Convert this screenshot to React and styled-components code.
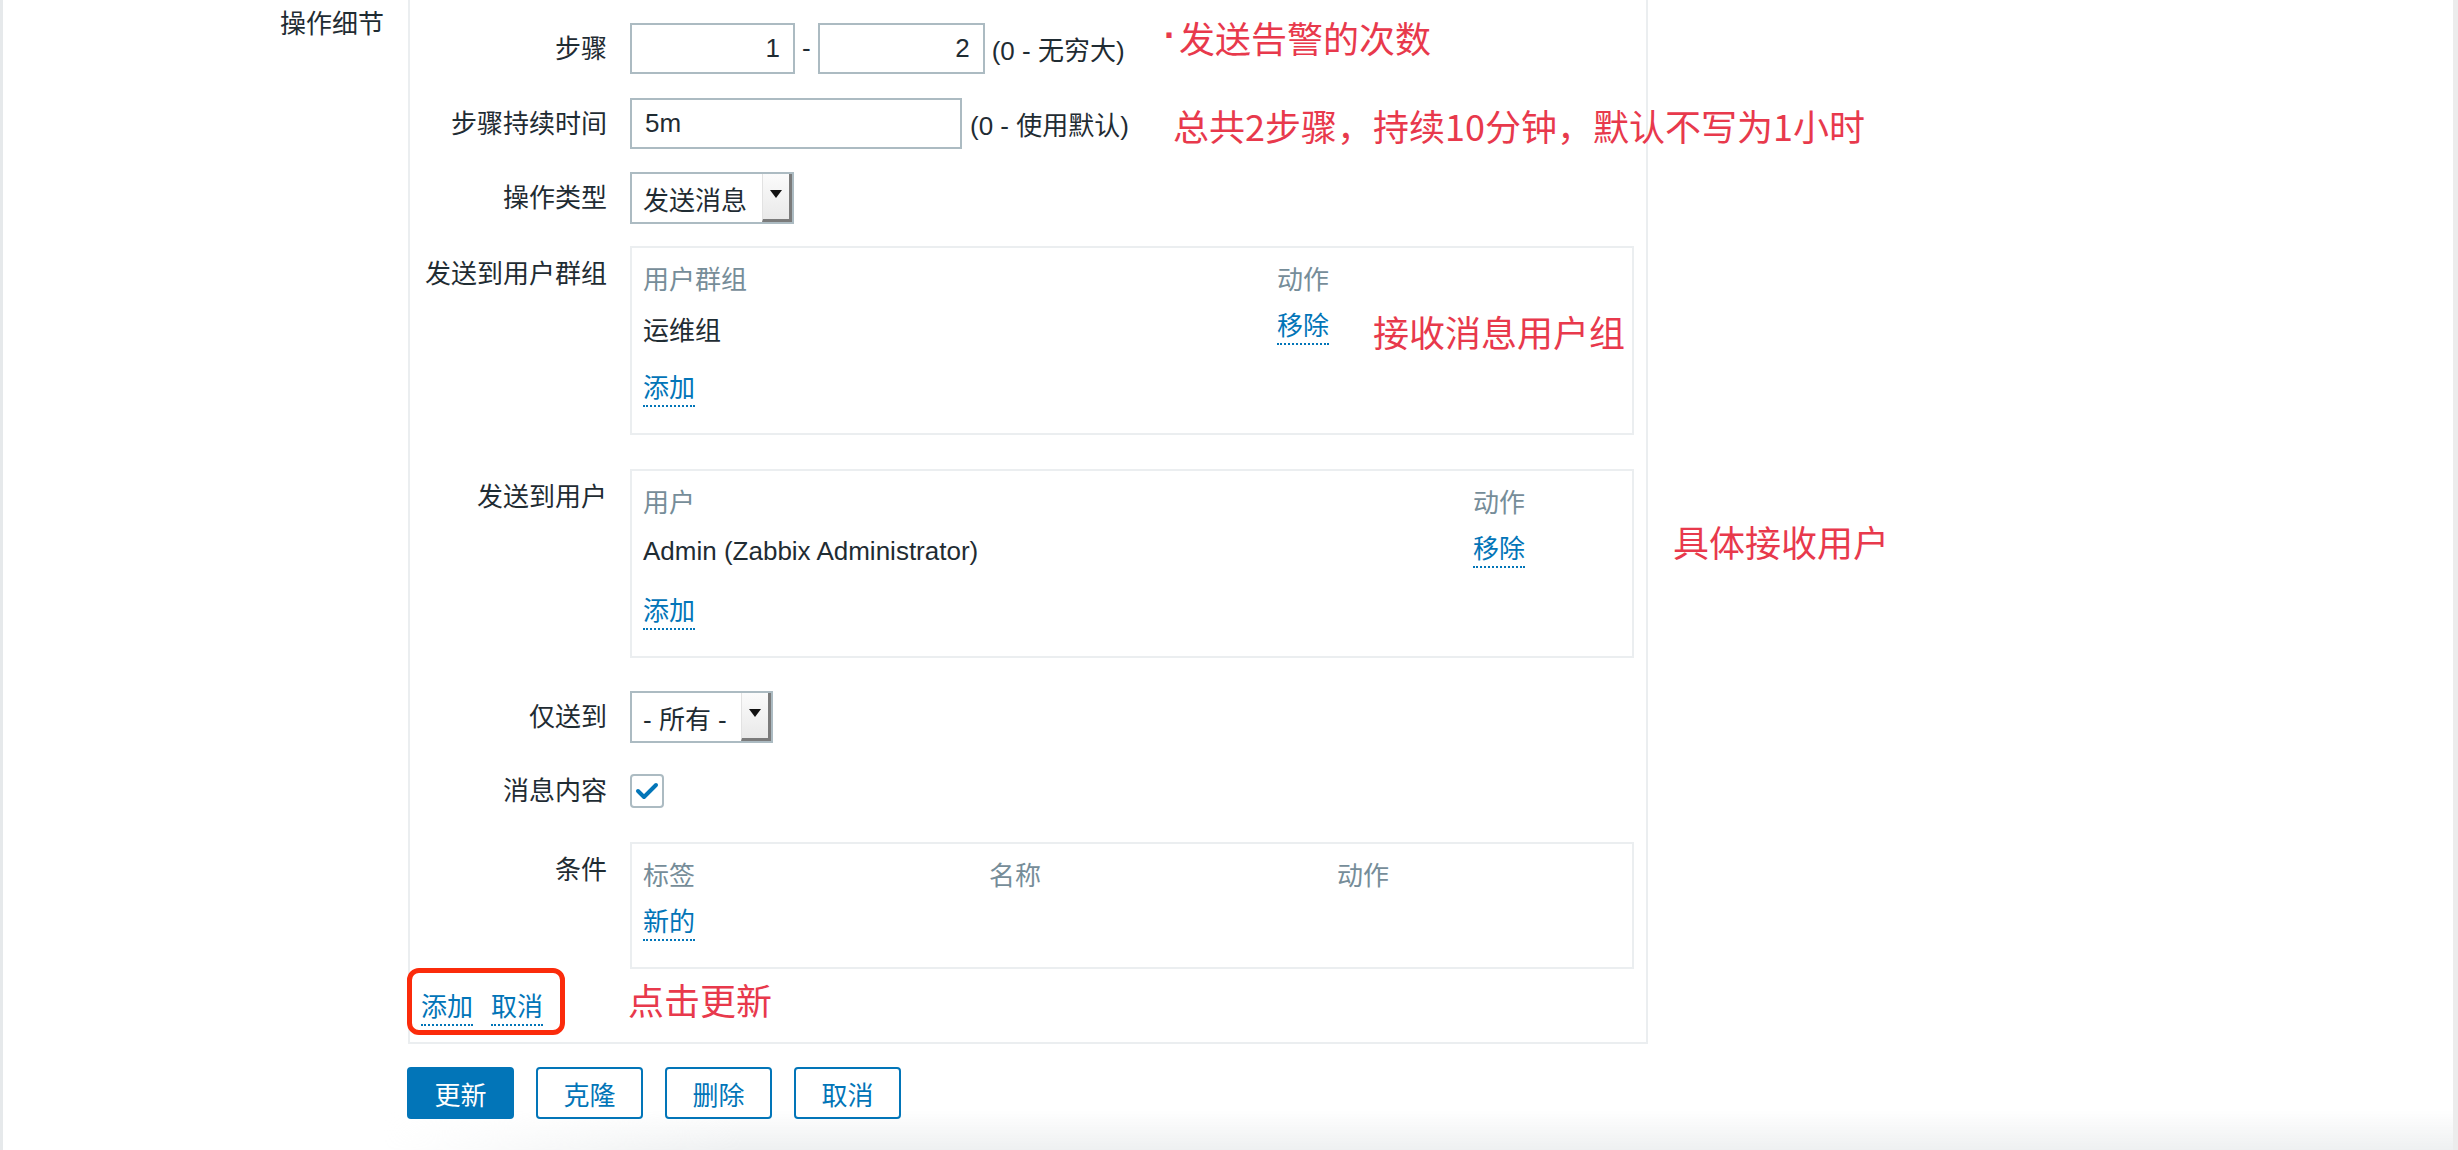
import React from "react";
import styled, { createGlobalStyle } from "styled-components";

const GlobalStyle = createGlobalStyle`
  html, body {
    margin: 0;
    padding: 0;
    background: #ffffff;
  }
  body {
    font-family: "Liberation Sans", Arial, "Noto Sans CJK SC", sans-serif;
    color: #1f2c33;
  }
`;

const Root = styled.div`
  width: 2458px;
  height: 1150px;
  box-sizing: border-box;
  border-left: 3px solid #e6e9eb;
  border-right: 5px solid #ececec;
  position: relative;
  overflow: hidden;
  display: grid;
  grid-template-columns: 381px 1240px;
  column-gap: 24px;
  align-content: start;

  &::after {
    content: "";
    position: absolute;
    left: 380px;
    right: 0;
    bottom: 0;
    height: 40px;
    background: linear-gradient(180deg, rgba(238, 240, 241, 0) 0%, #eef0f1 100%);
    -webkit-mask-image: linear-gradient(90deg, transparent 0, #000 360px);
    mask-image: linear-gradient(90deg, transparent 0, #000 360px);
    pointer-events: none;
  }
`;

const SectionLabel = styled.div`
  text-align: right;
  font-size: 26px;
  line-height: 30px;
  padding-top: 9px;
`;

const Panel = styled.div`
  border: 2px solid #ebeef0;
  border-top: none;
  padding: 23px 0 8px 0;
  display: flex;
  flex-direction: column;
`;

const FormRow = styled.div`
  position: relative;
  display: grid;
  grid-template-columns: 197px 1fr;
  column-gap: 23px;
  margin-top: ${(p) => p.$mt || 0}px;
  align-items: ${(p) => (p.$box ? "start" : "center")};
`;

const Label = styled.div`
  text-align: right;
  font-size: 26px;
  line-height: 30px;
  padding-top: ${(p) => (p.$box ? 13 : 0)}px;
  white-space: nowrap;
`;

const Controls = styled.div`
  display: flex;
  align-items: center;
  gap: ${(p) => p.$gap || 7}px;
  font-size: 26px;
`;

const TextInput = styled.input`
  width: ${(p) => p.$w}px;
  height: 51px;
  box-sizing: border-box;
  border: 2px solid #acbbc2;
  padding: 0 13px;
  font-family: inherit;
  font-size: 26px;
  color: #1f2c33;
  text-align: ${(p) => p.$align || "left"};
  background: #fff;
  outline: none;
`;

const Hint = styled.span`
  font-size: 26px;
  white-space: nowrap;
`;

const Select = styled.div`
  width: ${(p) => p.$w}px;
  height: 52px;
  box-sizing: border-box;
  border: 2px solid #acbbc2;
  display: flex;
  align-items: stretch;
  background: #fff;
`;

const SelectText = styled.span`
  flex: 1;
  display: flex;
  align-items: center;
  padding-left: 11px;
  font-size: 26px;
  white-space: nowrap;
`;

const ArrowBtn = styled.span`
  width: 30px;
  box-sizing: border-box;
  background: linear-gradient(180deg, #fbfbfb 0%, #e9e9e9 100%);
  border-right: 3px solid #7b7b7b;
  border-bottom: 3px solid #7b7b7b;
  border-left: 1px solid #e2e2e2;
  display: flex;
  align-items: center;
  justify-content: center;
  padding-bottom: 6px;

  &::before {
    content: "";
    width: 0;
    height: 0;
    border-left: 6px solid transparent;
    border-right: 6px solid transparent;
    border-top: 8px solid #111;
  }
`;

const Box = styled.div`
  width: 1004px;
  box-sizing: border-box;
  border: 2px solid #ebeef0;
  padding: 15px 11px 12px;
  display: grid;
  grid-template-columns: ${(p) => p.$cols};
  font-size: 26px;
`;

const HeadCell = styled.div`
  color: #768d99;
  line-height: 34px;
  white-space: nowrap;
`;

const Cell = styled.div`
  height: 62px;
  display: flex;
  align-items: center;
  white-space: nowrap;
`;

const AddCell = styled.div`
  grid-column: 1 / -1;
  height: 62px;
  display: flex;
  align-items: center;
`;

const Link = styled.span`
  color: #0275b8;
  border-bottom: 2px dotted #0275b8;
  line-height: 30px;
  padding-bottom: 2px;
  font-size: 26px;
  cursor: pointer;
`;

const Checkbox = styled.span`
  width: 34px;
  height: 34px;
  box-sizing: border-box;
  border: 2px solid #acbbc2;
  border-radius: 4px;
  display: flex;
  align-items: center;
  justify-content: center;
  background: #fff;
`;

const FooterLinks = styled.div`
  position: relative;
  margin-top: 15px;
  height: 50px;
  display: flex;
  align-items: center;
  gap: 18px;
  padding-left: 11px;
`;

const RedFrame = styled.div`
  position: absolute;
  left: -3px;
  top: -16px;
  width: 158px;
  height: 67px;
  box-sizing: border-box;
  border: 5px solid #fb2b0b;
  border-radius: 12px;
  pointer-events: none;
`;

const Note = styled.span`
  position: absolute;
  left: ${(p) => p.$x}px;
  top: ${(p) => p.$y}px;
  font-family: "Noto Sans CJK SC", "Liberation Sans", sans-serif;
  font-size: 36px;
  line-height: 36px;
  color: #e8394c;
  white-space: nowrap;
  pointer-events: none;
`;

const Dot = styled.span`
  font-family: "Liberation Sans", sans-serif;
  font-weight: 700;
  margin-right: 3px;
  vertical-align: 5px;
`;

const ButtonRow = styled.div`
  grid-column: 2;
  margin-top: 23px;
  display: flex;
  gap: 22px;
  margin-left: -1px;
  position: relative;
  z-index: 1;
`;

const Button = styled.button`
  width: 107px;
  height: 52px;
  box-sizing: border-box;
  border: 2px solid #0275b8;
  border-radius: 4px;
  background: ${(p) => (p.$primary ? "#0275b8" : "#ffffff")};
  color: ${(p) => (p.$primary ? "#ffffff" : "#0275b8")};
  font-family: inherit;
  font-size: 26px;
  padding: 0;
  cursor: pointer;
`;

function CheckMark() {
  return (
    <svg width="24" height="20" viewBox="0 0 24 20">
      <polyline
        points="3,10 9,16 21,4"
        fill="none"
        stroke="#0275b8"
        strokeWidth="4"
        strokeLinecap="round"
        strokeLinejoin="round"
      />
    </svg>
  );
}

export default function App() {
  return (
    <>
      <GlobalStyle />
      <Root>
        <SectionLabel>操作细节</SectionLabel>
        <Panel>
          <FormRow>
            <Label>步骤</Label>
            <Controls>
              <TextInput $w={165} $align="right" defaultValue="1" />
              <Hint>-</Hint>
              <TextInput $w={167} $align="right" defaultValue="2" />
              <Hint>(0 - 无穷大)</Hint>
            </Controls>
            <Note $x={754} $y={-5}>
              <Dot>·</Dot>发送告警的次数
            </Note>
          </FormRow>

          <FormRow $mt={24}>
            <Label>步骤持续时间</Label>
            <Controls $gap={8}>
              <TextInput $w={332} defaultValue="5m" />
              <Hint>(0 - 使用默认)</Hint>
            </Controls>
            <Note $x={763} $y={9}>总共2步骤，持续10分钟，默认不写为1小时</Note>
          </FormRow>

          <FormRow $mt={23}>
            <Label>操作类型</Label>
            <Controls>
              <Select $w={164}>
                <SelectText>发送消息</SelectText>
                <ArrowBtn />
              </Select>
            </Controls>
          </FormRow>

          <FormRow $mt={22} $box>
            <Label $box>发送到用户群组</Label>
            <Box $cols="634px 1fr">
              <HeadCell>用户群组</HeadCell>
              <HeadCell>动作</HeadCell>
              <Cell>运维组</Cell>
              <Cell>
                <Link>移除</Link>
              </Cell>
              <AddCell>
                <Link>添加</Link>
              </AddCell>
            </Box>
            <Note $x={963} $y={67}>接收消息用户组</Note>
          </FormRow>

          <FormRow $mt={34} $box>
            <Label $box>发送到用户</Label>
            <Box $cols="830px 1fr">
              <HeadCell>用户</HeadCell>
              <HeadCell>动作</HeadCell>
              <Cell>Admin (Zabbix Administrator)</Cell>
              <Cell>
                <Link>移除</Link>
              </Cell>
              <AddCell>
                <Link>添加</Link>
              </AddCell>
            </Box>
            <Note $x={1263} $y={54}>具体接收用户</Note>
          </FormRow>

          <FormRow $mt={33}>
            <Label>仅送到</Label>
            <Controls>
              <Select $w={143}>
                <SelectText>- 所有 -</SelectText>
                <ArrowBtn />
              </Select>
            </Controls>
          </FormRow>

          <FormRow $mt={31}>
            <Label>消息内容</Label>
            <Controls>
              <Checkbox>
                <CheckMark />
              </Checkbox>
            </Controls>
          </FormRow>

          <FormRow $mt={34} $box>
            <Label $box>条件</Label>
            <Box $cols="346px 348px 1fr">
              <HeadCell>标签</HeadCell>
              <HeadCell>名称</HeadCell>
              <HeadCell>动作</HeadCell>
              <AddCell>
                <Link>新的</Link>
              </AddCell>
            </Box>
          </FormRow>

          <FooterLinks>
            <Link>添加</Link>
            <Link>取消</Link>
            <RedFrame />
            <Note $x={218} $y={-3}>点击更新</Note>
          </FooterLinks>
        </Panel>

        <ButtonRow>
          <Button $primary>更新</Button>
          <Button>克隆</Button>
          <Button>删除</Button>
          <Button>取消</Button>
        </ButtonRow>
      </Root>
    </>
  );
}
